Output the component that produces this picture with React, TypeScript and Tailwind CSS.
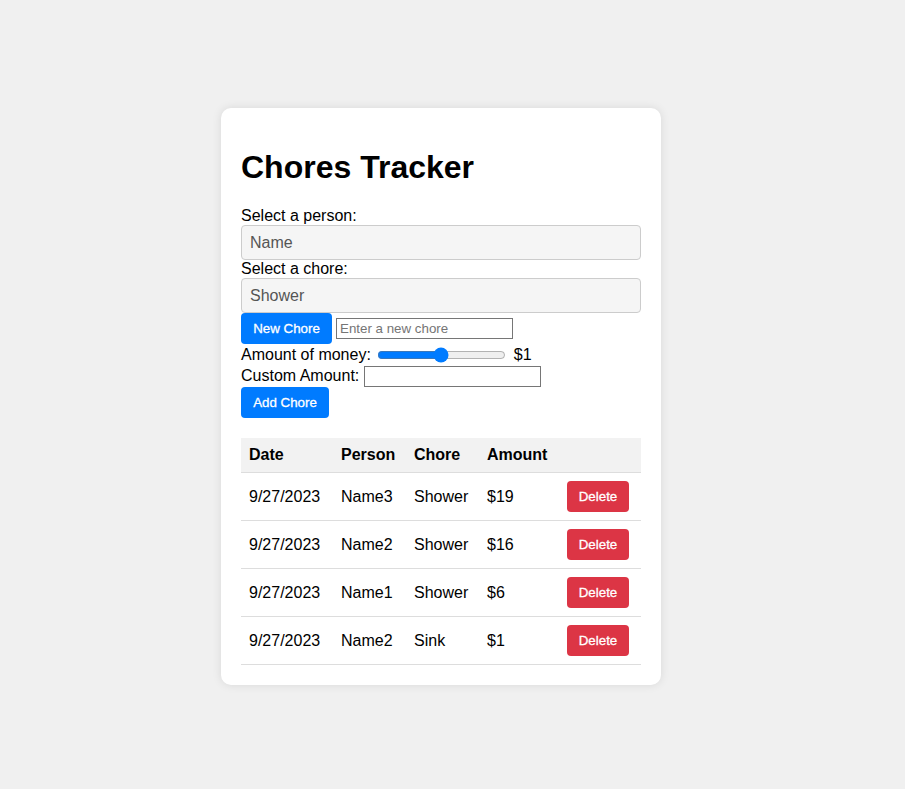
import React from "react";

const rows = [
  { date: "9/27/2023", person: "Name3", chore: "Shower", amount: "$19" },
  { date: "9/27/2023", person: "Name2", chore: "Shower", amount: "$16" },
  { date: "9/27/2023", person: "Name1", chore: "Shower", amount: "$6" },
  { date: "9/27/2023", person: "Name2", chore: "Sink", amount: "$1" },
];

export default function App() {
  return (
    <div
      className="min-h-[789px] bg-[#f0f0f0] pt-[108px] pl-[221px] text-black"
      style={{ fontFamily: '"Liberation Sans", Arial, sans-serif' }}
    >
      <div className="w-[440px] rounded-[10px] bg-white p-[20px] shadow-[0_0_10px_rgba(0,0,0,0.1)]">
        <h1 className="mt-[21px] mb-[21px] h-[37px] text-[32px] leading-[37px] font-bold">
          Chores Tracker
        </h1>
        <div className="h-[18px] text-[16px] leading-[18px]">Select a person:</div>
        <select
          defaultValue="Name"
          className="block h-[35px] w-[400px] appearance-none rounded-[4px] border border-[#ccc] bg-[#f5f5f5] px-[8px] text-[16px] text-[#555] outline-none"
        >
          <option>Name</option>
        </select>
        <div className="h-[18px] text-[16px] leading-[18px]">Select a chore:</div>
        <select
          defaultValue="Shower"
          className="block h-[35px] w-[400px] appearance-none rounded-[4px] border border-[#ccc] bg-[#f5f5f5] px-[8px] text-[16px] text-[#555] outline-none"
        >
          <option>Shower</option>
        </select>
        <div className="flex h-[31px] items-center gap-[4px]">
          <button className="h-[31px] w-[91px] rounded-[4px] bg-[#007bff] text-center text-[13.33px] text-white [-webkit-text-stroke:0.3px_white]">
            New Chore
          </button>
          <input
            type="text"
            placeholder="Enter a new chore"
            className="h-[21px] w-[177px] border border-[#767676] px-[3px] text-[13.33px] placeholder:text-[#757575] outline-none"
          />
        </div>
        <div className="flex h-[21px] items-center text-[16px] leading-[18px]">
          <span>Amount of money:</span>
          <input
            type="range"
            min={1}
            max={37}
            defaultValue={19}
            className="ml-[6px] mr-[8px] w-[129px] accent-[#007bff]"
          />
          <span>$1</span>
        </div>
        <div className="flex h-[22px] items-center text-[16px] leading-[18px]">
          <span>Custom Amount:</span>
          <input
            type="text"
            className="ml-[5px] h-[21px] w-[177px] border border-[#767676] px-[3px] text-[13.33px] outline-none"
          />
        </div>
        <button className="h-[31px] w-[88px] rounded-[4px] bg-[#007bff] text-center text-[13.33px] text-white [-webkit-text-stroke:0.3px_white]">
          Add Chore
        </button>

        <table className="mt-[20px] w-[400px] table-fixed border-collapse text-[16px] leading-[18px]">
          <colgroup>
            <col className="w-[92px]" />
            <col className="w-[73px]" />
            <col className="w-[73px]" />
            <col className="w-[80px]" />
            <col className="w-[82px]" />
          </colgroup>
          <thead>
            <tr className="border-b border-[#ddd] bg-[#f2f2f2]">
              <th className="p-[8px] text-left font-bold">Date</th>
              <th className="p-[8px] text-left font-bold">Person</th>
              <th className="p-[8px] text-left font-bold">Chore</th>
              <th className="p-[8px] text-left font-bold">Amount</th>
              <th className="p-[8px]"></th>
            </tr>
          </thead>
          <tbody>
            {rows.map((r, i) => (
              <tr key={i} className="border-b border-[#ddd]">
                <td className="p-[8px]">{r.date}</td>
                <td className="p-[8px]">{r.person}</td>
                <td className="p-[8px]">{r.chore}</td>
                <td className="p-[8px]">{r.amount}</td>
                <td className="p-[8px]">
                  <button className="block h-[31px] w-[62px] rounded-[4px] bg-[#dc3545] text-center text-[13.33px] text-white [-webkit-text-stroke:0.3px_white]">
                    Delete
                  </button>
                </td>
              </tr>
            ))}
          </tbody>
        </table>
      </div>
    </div>
  );
}
